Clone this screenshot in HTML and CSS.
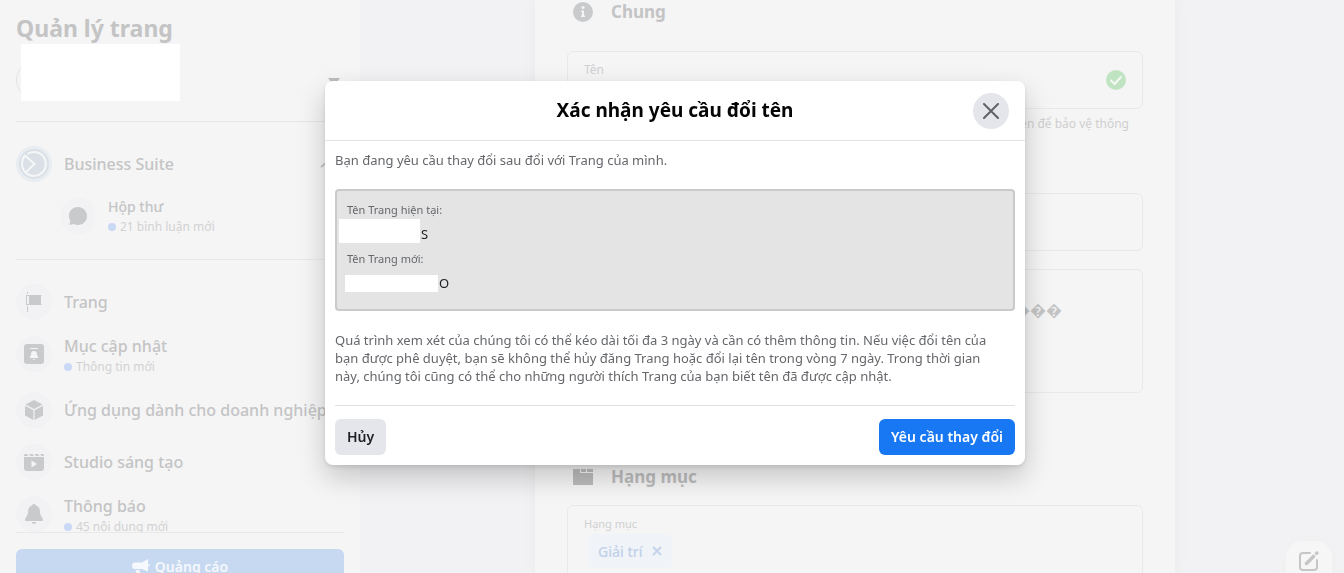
FILE: index.html
```html
<!DOCTYPE html>
<html lang="vi">
<head>
<meta charset="utf-8">
<title>Quản lý trang</title>
<link rel="stylesheet" href="styles.css">
</head>
<body>
<div class="page">
  <aside class="sidebar">
    <h1 class="sidebar-title">Quản lý trang</h1>
    <div class="switcher">
      <span class="switcher-avatar"></span>
      <span class="switcher-name"></span>
      <svg class="switcher-caret" width="12" height="8" viewBox="0 0 12 8"><path d="M0 0h12L6 8z" fill="#bcbdbf"/></svg>
    </div>
    <nav class="suite">
      <a class="nav-row" href="#">
        <span class="nav-icon nav-icon-suite">
          <svg width="36" height="36" viewBox="0 0 36 36" fill="none"><circle cx="18" cy="18" r="15" fill="#dae0e6"/><path d="M12 7.500A12 12 0 1 1 9.500 26.500L18.500 18 9 9.500C5 14 5 22 9.500 26.500" stroke="#f5f6f7" stroke-width="2" stroke-linejoin="round" stroke-linecap="round"/></svg>
        </span>
        <span class="nav-label">Business Suite</span>
        <svg class="suite-caret" width="14" height="8" viewBox="0 0 14 8" fill="none"><path d="M1 7l6-5 6 5" stroke="#c5c6c8" stroke-width="2"/></svg>
      </a>
      <a class="nav-row nav-sub" href="#">
        <span class="nav-icon">
          <svg width="20" height="20" viewBox="0 0 20 20" fill="#c9cacc"><path d="M10 1a9 9 0 1 1-4.300 16.900L1.300 19l1-4.200A9 9 0 0 1 10 1z"/></svg>
        </span>
        <span class="nav-text sub-text"><span class="nav-label">Hộp thư</span><span class="nav-note">21 bình luận mới</span></span>
      </a>
    </nav>
    <nav class="nav-list">
      <a class="nav-row" href="#">
        <span class="nav-icon">
          <svg width="20" height="20" viewBox="0 0 20 20" fill="#c9cacc"><path d="M3 0h1v2H3zM3 14h1v6H3zM2 3h1v10H2zM3 3h2v1H3zM3 12h2v1H3z"/><path d="M5 3h13l-1 1v8l1 1H5z"/></svg>
        </span>
        <span class="nav-label">Trang</span>
      </a>
      <a class="nav-row nav-updates" href="#">
        <span class="nav-icon">
          <svg width="20" height="20" viewBox="0 0 20 20"><rect width="20" height="20" rx="3" fill="#c9cacc"/><path d="M6 4.500h8" stroke="#f5f5f6" stroke-width="1"/><path d="M10 7c2.500 0 3 2 3 4l1.500 3h-9L7 11c0-2 .5-4 3-4zM8.700 15h2.600q-1.300 1.800-2.600 0z" fill="#f5f5f6"/></svg>
        </span>
        <span class="nav-text"><span class="nav-label">Mục cập nhật</span><span class="nav-note">Thông tin mới</span></span>
      </a>
      <a class="nav-row" href="#">
        <span class="nav-icon">
          <svg width="20" height="20" viewBox="0 0 20 20" fill="#c9cacc"><path d="M10 0l8.500 4.600L10 9 1.500 4.600zM1 5.800l8.400 4.400V20L1 15.400zM19 5.800l-8.400 4.400V20l8.400-4.600z"/></svg>
        </span>
        <span class="nav-label">Ứng dụng dành cho doanh nghiệp</span>
      </a>
      <a class="nav-row" href="#">
        <span class="nav-icon">
          <svg width="20" height="20" viewBox="0 0 20 20"><path d="M0 5h20v11q0 3-3 3H3q-3 0-3-3z" fill="#c9cacc"/><path d="M0 4V3q0-1 1-1h2l1.500 2zM5 2h3.500L10 4H6.500zM10.500 2H14l1.500 2H12zM16 2h3q1 0 1 1v1h-2.500z" fill="#c9cacc"/><path d="M7.500 8.500v7l5.500-3.500z" fill="#f5f5f6"/></svg>
        </span>
        <span class="nav-label">Studio sáng tạo</span>
      </a>
      <a class="nav-row" href="#">
        <span class="nav-icon">
          <svg width="20" height="20" viewBox="0 0 20 20" fill="#c9cacc"><path d="M10 0c1 0 1.800.6 2 1.500 3 1 4 3.500 4 6.500 0 4 3 5.500 3 8 0 .8-.5 1-1 1H2c-.5 0-1-.2-1-1 0-2.500 3-4 3-8 0-3 1-5.500 4-6.500C8.200.6 9 0 10 0zM7.700 18h4.600c-.4 2.600-4.200 2.600-4.600 0z"/></svg>
        </span>
        <span class="nav-text"><span class="nav-label">Thông báo</span><span class="nav-note">45 nội dung mới</span></span>
      </a>
    </nav>
    <div class="sidebar-foot">
      <button class="promote" type="button">
        <svg width="18" height="16" viewBox="0 0 18 16" fill="#f5f8fc"><path d="M16 0v12.500L10 10H3q-3 0-3-3.200T3 3.500h7zM3.500 11h4l1 4.500H5zM16.500 4.500q3 1.800 0 3.500z"/></svg>
        Quảng cáo
      </button>
    </div>
  </aside>

  <main class="main">
    <form class="sheet">
      <h2 class="section-title">
        <svg width="20" height="20" viewBox="0 0 20 20"><circle cx="10" cy="10" r="10" fill="#c9cacc"/><circle cx="10" cy="5.500" r="1.500" fill="#f5f5f5"/><path d="M8 8.500h3v5h1v1.500H8v-1.500h1V10H8z" fill="#f5f5f5"/></svg>
        Chung
      </h2>
      <div class="field name-field">
        <label class="field-label" for="name">Tên</label>
        <input class="field-input" id="name" type="text">
        <svg class="field-ok" width="20" height="20" viewBox="0 0 20 20" fill="none"><circle cx="10" cy="10" r="10" fill="#c0e4c2"/><path d="M5 10.500l3.500 3.500 6.500-7" stroke="#f5f7f5" stroke-width="2" stroke-linecap="round"/></svg>
      </div>
      <p class="hint">tên để bảo vệ thông</p>
      <div class="field user-field"><input class="field-input" type="text" aria-label="Tên người dùng"></div>
      <div class="field about-field"><textarea class="field-area" aria-label="Mô tả">&#xFFFD;&#xFFFD;&#xFFFD;</textarea></div>
      <h2 class="section-title category-title">
        <svg width="20" height="20" viewBox="0 0 20 20" fill="#bcbcbd"><path d="M0 2h7v4h13v12H0zM8 2h5v3H8zM14 2h6v3h-6z"/></svg>
        Hạng mục
      </h2>
      <div class="field category-field">
        <span class="field-label">Hạng mục</span>
        <span class="chip">Giải trí
          <button class="chip-x" type="button" aria-label="Xóa"><svg width="10" height="10" viewBox="0 0 10 10"><path d="M1 1l8 8M9 1L1 9" stroke="#c3d3ea" stroke-width="2"/></svg></button>
        </span>
      </div>
    </form>
  </main>
</div>

<button class="compose" type="button" aria-label="Tin nhắn mới">
  <svg width="20" height="20" viewBox="0 0 20 20" fill="none" stroke="#c5c6c7" stroke-linecap="round"><path d="M11 2H4Q1 2 1 5v11q0 3 3 3h11q3 0 3-3V9" stroke-width="2"/><path d="M7.500 12.500l7-7" stroke-width="3.600"/><path d="M17.700 2.200l.1-.1" stroke-width="3.600"/></svg>
</button>

<div class="overlay">
  <section class="modal" role="dialog" aria-modal="true" aria-labelledby="modal-title">
    <header class="modal-head">
      <h2 class="modal-title" id="modal-title">Xác nhận yêu cầu đổi tên</h2>
      <button class="modal-close" type="button" aria-label="Đóng"><svg width="16" height="16" viewBox="0 0 16 16"><path d="M1 1l14 14M15 1L1 15" stroke="#606266" stroke-width="2" stroke-linecap="round"/></svg></button>
    </header>
    <div class="modal-body">
      <p class="modal-text">Bạn đang yêu cầu thay đổi sau đổi với Trang của mình.</p>
      <dl class="names">
        <dt class="names-label">Tên Trang hiện tại:</dt>
        <dd class="names-value names-old"><span class="mask mask-old"></span>S</dd>
        <dt class="names-label">Tên Trang mới:</dt>
        <dd class="names-value"><span class="mask"></span>O</dd>
      </dl>
      <p class="modal-text">Quá trình xem xét của chúng tôi có thể kéo dài tối đa 3 ngày và cần có thêm thông tin. Nếu việc đổi tên của bạn được phê duyệt, bạn sẽ không thể hủy đăng Trang hoặc đổi lại tên trong vòng 7 ngày. Trong thời gian này, chúng tôi cũng có thể cho những người thích Trang của bạn biết tên đã được cập nhật.</p>
      <footer class="modal-foot">
        <button class="btn" type="button">Hủy</button>
        <button class="btn btn-primary" type="button">Yêu cầu thay đổi</button>
      </footer>
    </div>
  </section>
</div>
</body>
</html>
```
FILE: styles.css
```css
* { box-sizing: border-box; }
body {
  margin: 0;
  height: 100vh;
  overflow: hidden;
  background: #f2f2f4;
  font-family: "Noto Sans", "Open Sans", sans-serif;
}
h1, h2, p, dl, dd { margin: 0; }
button, input, textarea { font: inherit; border: 0; padding: 0; background: none; }
svg { flex: none; display: block; }
a { color: inherit; text-decoration: none; }

.page { display: flex; height: 100vh; overflow: hidden; }

.sidebar {
  flex: 0 0 360px;
  display: flex;
  flex-direction: column;
  padding: 0 16px;
  background: #f5f5f5;
  color: #c4c4c5;
}
.sidebar-title { padding-top: 12px; font-size: 23px; line-height: 32px; font-weight: 700; }
.switcher { position: relative; display: flex; flex: none; height: 78px; border-bottom: 1px solid #e6e6e7; }
.switcher-avatar { position: absolute; left: 0; top: 18px; width: 36px; height: 36px; border: 1px solid #e3e3e4; border-radius: 50%; }
.switcher-name { position: relative; width: 159px; height: 57px; margin-left: 5px; background: #fff; }
.switcher-caret { margin: 34px 4px 0 auto; }

.suite { flex: none; padding: 16px 0 17px; border-bottom: 1px solid #e9e9ea; }
.nav-row { display: flex; align-items: center; gap: 12px; height: 52px; white-space: nowrap; }
.nav-sub { padding-left: 44px; }
.nav-icon { display: grid; place-items: center; flex: none; width: 36px; height: 36px; border-radius: 50%; background: #f2f2f4; }
.nav-icon-suite { background: #e8edf2; }
.nav-text { display: flex; flex-direction: column; padding-top: 4px; }
.nav-label { font-size: 16px; line-height: 22px; font-weight: 500; }
.nav-note { display: flex; align-items: center; gap: 4px; font-size: 12px; line-height: 20px; color: #d2d2d3; }
.nav-note::before { content: ""; width: 8px; height: 8px; border-radius: 50%; background: #c9d8f5; }
.sub-text { padding-top: 2px; }
.sub-text .nav-label { font-size: 14px; line-height: 20px; }
.suite-caret { margin: 0 10px 0 auto; }
.nav-list { flex: 1; min-height: 0; padding-top: 16px; overflow: hidden; }
.nav-updates { margin-bottom: 4px; }
.sidebar-foot { flex: 0 0 41px; padding-top: 16px; border-top: 1px solid #e9e9ea; overflow: hidden; }
.promote {
  display: flex; align-items: center; justify-content: center; gap: 5px;
  width: 100%; height: 36px; border-radius: 6px;
  background: #c7d9f1; color: #f5f8fc; font-size: 14px; line-height: 20px; font-weight: 600;
}

.main { flex: 1; display: flex; justify-content: center; padding-left: 6px; }
.sheet { width: 640px; padding: 0 32px; background: #f5f5f5; box-shadow: 0 0 12px #e9e9eb; }
.section-title { display: flex; align-items: center; gap: 18px; height: 51px; padding: 0 6px 27px; font-size: 17px; line-height: 24px; font-weight: 700; color: #c4c4c5; }
.field { border: 1px solid #e9e9e9; border-radius: 6px; }
.name-field { position: relative; height: 58px; padding: 8px 16px; }
.field-label { display: block; font-size: 12px; line-height: 20px; color: #d0d0d1; }
.category-field .field-label { font-size: 11px; }
.field-input { width: 100%; height: 20px; }
.field-ok { position: absolute; right: 16px; top: 18px; }
.hint { padding: 6px 14px 0 0; font-size: 12px; line-height: 18px; color: #cfcfd0; text-align: right; }
.user-field { height: 58px; margin-top: 60px; }
.about-field { height: 124px; margin-top: 18px; }
.field-area { display: block; width: 100%; height: 100%; padding: 28px 80px 0 0; font-size: 16px; line-height: 24px; color: #c4c4c5; text-align: right; resize: none; }
.category-title { height: 112px; padding-top: 72px; padding-bottom: 16px; color: #bcbcbd; }
.category-field { height: 90px; padding: 8px 16px; }
.chip { display: inline-flex; align-items: center; gap: 10px; margin-left: 4px; padding: 0 10px; height: 34px; border-radius: 6px; background: #f0f3f7; color: #c0d0ea; font-size: 14px; font-weight: 500; }

.compose {
  position: fixed; right: 12px; bottom: -36px;
  width: 46px; height: 68px; padding: 10px 13px 38px;
  border-radius: 16px; background: #f6f6f6;
  box-shadow: 0 0 12px #efeff0;
}

.overlay { position: fixed; inset: 0; display: grid; place-items: center; padding: 0 0 27px 6px; }
.modal { width: 700px; max-width: 100%; border-radius: 8px; background: #fff; box-shadow: 0 12px 28px rgba(0,0,0,.2), 0 2px 4px rgba(0,0,0,.1); }
.modal-head { position: relative; display: grid; place-items: center; height: 60px; border-bottom: 1px solid #e2e3e5; }
.modal-title { padding-bottom: 2px; font-size: 19px; line-height: 24px; font-weight: 700; color: #050505; }
.modal-close { position: absolute; right: 16px; top: 12px; display: grid; place-items: center; width: 36px; height: 36px; border-radius: 50%; background: #e4e6eb; }
.modal-body { padding: 10px; }
.modal-text { padding-right: 10px; font-size: 13px; line-height: 18px; color: #65676b; }
.names { height: 122px; margin: 20px 0; padding: 10px; border: 2px solid #cacaca; border-radius: 4px; background: #e4e4e4; }
.names-label { font-size: 11px; line-height: 18px; color: #65676b; }
.names-value { display: flex; align-items: center; gap: 1px; height: 31px; font-size: 13px; line-height: 31px; color: #1c1e21; }
.names-old { margin-left: -8px; }
.mask { width: 93px; height: 17px; margin-left: -2px; background: #fff; }
.mask-old { align-self: flex-start; width: 81px; height: 24px; margin-left: 0; }
.modal-foot { display: flex; justify-content: space-between; margin-top: 20px; padding-top: 13px; border-top: 1px solid #dfe0e2; }
.btn { height: 36px; padding: 0 12px; border-radius: 6px; background: #e4e6eb; color: #1c1e21; font-size: 14px; line-height: 20px; font-weight: 600; }
.btn-primary { background: #1877f2; color: #fff; }
```
